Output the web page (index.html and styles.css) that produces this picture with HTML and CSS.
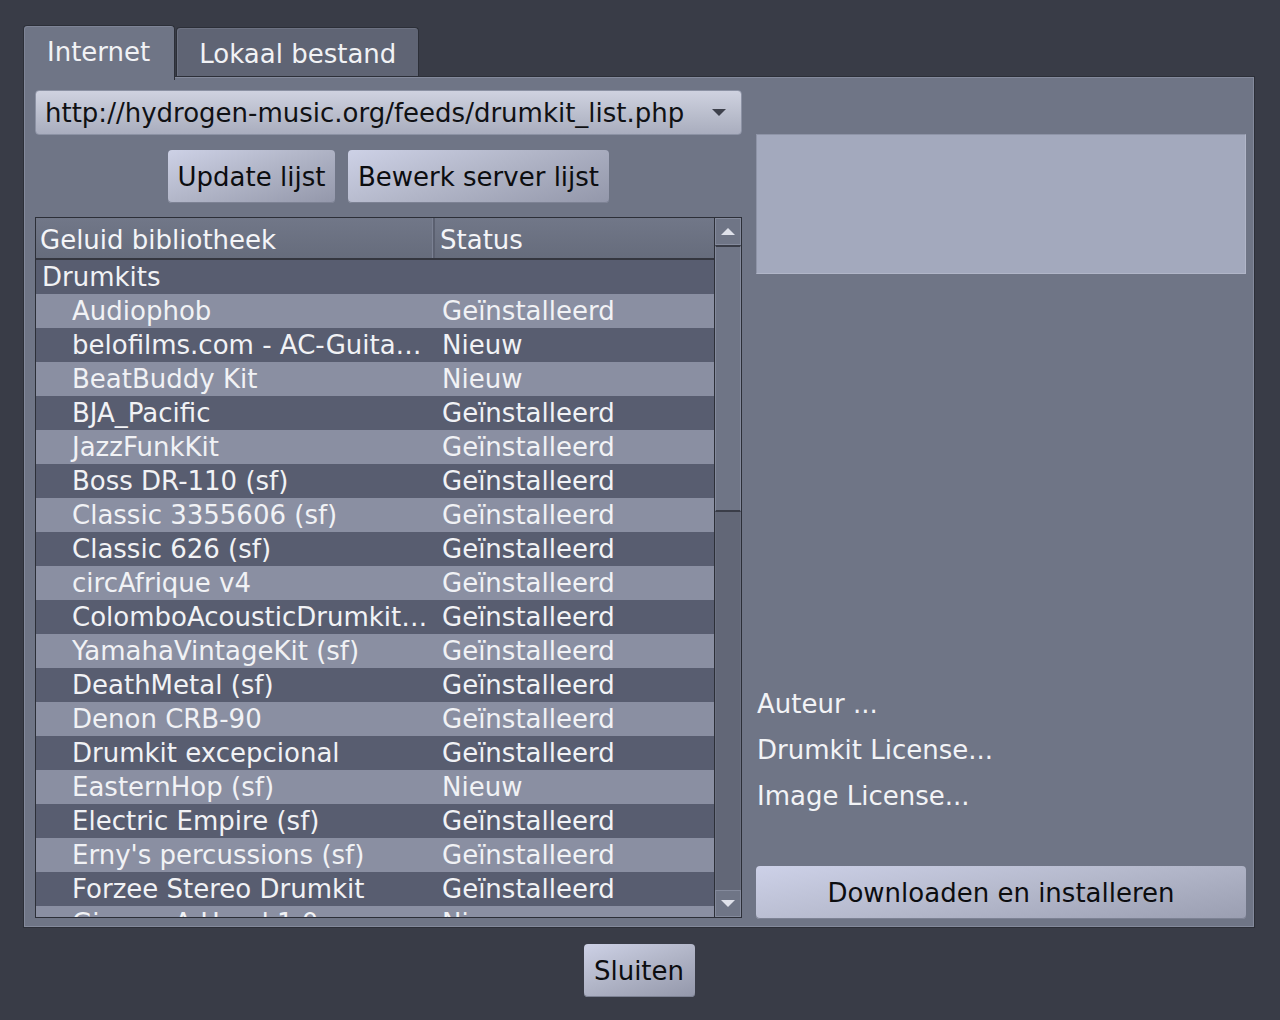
FILE: index.html
```html
<!DOCTYPE html>
<html lang="nl">
<head>
<meta charset="utf-8">
<title>Soundlibrary</title>
<link rel="stylesheet" href="styles.css">
</head>
<body>
<div class="dialog">
  <div class="tabbar">
    <div class="tab active">Internet</div>
    <div class="tab">Lokaal bestand</div>
  </div>
  <div class="pane">
    <div class="left">
      <div class="combo">
        <span class="combo-text">http://hydrogen-music.org/feeds/drumkit_list.php</span>
        <svg class="combo-arrow" width="16" height="9" viewBox="0 0 16 9"><polygon points="1,1 15,1 8,8" fill="#3e414c"/></svg>
      </div>
      <div class="btnrow">
        <button class="btn">Update lijst</button>
        <button class="btn">Bewerk server lijst</button>
      </div>
      <div class="table">
        <div class="tmain">
          <div class="thead">
            <div class="th c1">Geluid bibliotheek</div>
            <div class="th c2">Status</div>
          </div>
          <div class="tbody">
            <div class="row group"><span class="c1 name top">Drumkits</span><span class="c2"></span></div>
            <div class="row light"><span class="c1 name">Audiophob</span><span class="c2">Geïnstalleerd</span></div>
            <div class="row dark"><span class="c1 name">belofilms.com - AC-Guita…</span><span class="c2">Nieuw</span></div>
            <div class="row light"><span class="c1 name">BeatBuddy Kit</span><span class="c2">Nieuw</span></div>
            <div class="row dark"><span class="c1 name">BJA_Pacific</span><span class="c2">Geïnstalleerd</span></div>
            <div class="row light"><span class="c1 name">JazzFunkKit</span><span class="c2">Geïnstalleerd</span></div>
            <div class="row dark"><span class="c1 name">Boss DR-110 (sf)</span><span class="c2">Geïnstalleerd</span></div>
            <div class="row light"><span class="c1 name">Classic 3355606 (sf)</span><span class="c2">Geïnstalleerd</span></div>
            <div class="row dark"><span class="c1 name">Classic 626 (sf)</span><span class="c2">Geïnstalleerd</span></div>
            <div class="row light"><span class="c1 name">circAfrique v4</span><span class="c2">Geïnstalleerd</span></div>
            <div class="row dark"><span class="c1 name">ColomboAcousticDrumkit…</span><span class="c2">Geïnstalleerd</span></div>
            <div class="row light"><span class="c1 name">YamahaVintageKit (sf)</span><span class="c2">Geïnstalleerd</span></div>
            <div class="row dark"><span class="c1 name">DeathMetal (sf)</span><span class="c2">Geïnstalleerd</span></div>
            <div class="row light"><span class="c1 name">Denon CRB-90</span><span class="c2">Geïnstalleerd</span></div>
            <div class="row dark"><span class="c1 name">Drumkit excepcional</span><span class="c2">Geïnstalleerd</span></div>
            <div class="row light"><span class="c1 name">EasternHop (sf)</span><span class="c2">Nieuw</span></div>
            <div class="row dark"><span class="c1 name">Electric Empire (sf)</span><span class="c2">Geïnstalleerd</span></div>
            <div class="row light"><span class="c1 name">Erny's percussions (sf)</span><span class="c2">Geïnstalleerd</span></div>
            <div class="row dark"><span class="c1 name">Forzee Stereo Drumkit</span><span class="c2">Geïnstalleerd</span></div>
            <div class="row light"><span class="c1 name">Gimme A Hand 1.0</span><span class="c2">Nieuw</span></div>
          </div>
        </div>
        <div class="scrollbar">
          <div class="sb-btn"><svg width="16" height="9" viewBox="0 0 16 9"><polygon points="1,8 15,8 8,1" fill="#dfe1ea"/></svg></div>
          <div class="sb-handle"></div>
          <div class="sb-track"></div>
          <div class="sb-btn"><svg width="16" height="9" viewBox="0 0 16 9"><polygon points="1,1 15,1 8,8" fill="#dfe1ea"/></svg></div>
        </div>
      </div>
    </div>
    <div class="right">
      <div class="imagebox"></div>
      <div class="spacer"></div>
      <div class="info">
        <div class="info-line">Auteur ...</div>
        <div class="info-line">Drumkit License...</div>
        <div class="info-line">Image License...</div>
      </div>
      <button class="btn wide">Downloaden en installeren</button>
    </div>
  </div>
  <div class="footer">
    <button class="btn">Sluiten</button>
  </div>
</div>
</body>
</html>
```

FILE: styles.css
```css
* { box-sizing: border-box; }
html, body {
  margin: 0;
  padding: 0;
  background: #393c47;
  width: 1280px;
  height: 1020px;
  overflow: hidden;
  font-family: "DejaVu Sans", sans-serif;
  font-size: 26px;
  color: #f1f2f5;
}
.dialog {
  padding: 23px 25px 0 23px;
}
.tabbar {
  display: flex;
  align-items: flex-end;
  height: 55px;
  position: relative;
  z-index: 2;
}
.tab {
  height: 49px;
  padding: 4px 22px 0 22px;
  margin-left: 1px;
  background: #5f6474;
  border: 1px solid #2c2f38;
  border-bottom: none;
  border-radius: 4px 4px 0 0;
  display: flex;
  align-items: center;
  box-shadow: inset 1px 1px 0 #6d7282;
  margin-bottom: 2px;
  white-space: nowrap;
}
.tab.active {
  height: 55px;
  margin-left: 0;
  margin-bottom: -2px;
  padding: 0 24px 2px 23px;
  background: #6f7586;
  box-shadow: inset 1px 1px 0 #7e8496;
}
.pane {
  height: 852px;
  margin-top: -2px;
  background: #6f7586;
  border: 1px solid #2c2f38;
  box-shadow: inset 0 0 0 1px #848a9c;
  display: flex;
  padding: 13px 8px 8px 11px;
  gap: 14px;
}
.left {
  width: 707px;
  display: flex;
  flex-direction: column;
}
.combo {
  height: 45px;
  border-radius: 4px;
  background: linear-gradient(180deg, #cfd2e0 0%, #b8bccb 60%, #a9adbe 100%);
  border: 1px solid #8c92a4;
  display: flex;
  align-items: center;
  padding: 0 14px 0 9px;
  color: #101114;
}
.combo-text { flex: 1; white-space: nowrap; }
.combo-arrow { display: block; }
.btnrow {
  display: flex;
  justify-content: center;
  gap: 13px;
  margin-top: 15px;
}
.btn {
  font-family: "DejaVu Sans", sans-serif;
  font-size: 26px;
  color: #0c0d10;
  height: 53px;
  padding: 0;
  white-space: nowrap;
  border: none;
  border-radius: 4px;
  background: linear-gradient(160deg, #cdd1e6 0%, #b3b7c9 45%, #9397aa 100%);
  box-shadow: inset 0 -1px 0 #7d8294;
}
.btnrow .btn:first-child { width: 167px; }
.btnrow .btn:last-child { width: 261px; }
.table {
  margin-top: 14px;
  height: 701px;
  border: 1px solid #2c2f38;
  display: flex;
  background: #6f7586;
}
.tmain {
  width: 679px;
  display: flex;
  flex-direction: column;
  overflow: hidden;
}
.thead {
  display: flex;
  height: 42px;
  background: linear-gradient(180deg, #717788 0%, #666c7c 100%);
  border-bottom: 2px solid #34363f;
}
.th {
  display: flex;
  align-items: center;
  padding-left: 4px;
  padding-top: 3px;
  color: #f4f5f8;
}
.th.c1 {
  width: 399px;
  border-right: 2px solid #5b6070;
  box-shadow: inset -1px 0 0 #7b8193;
}
.th.c2 { flex: 1; padding-left: 5px; }
.tbody { flex: 1; overflow: hidden; }
.row {
  display: flex;
  height: 34px;
  align-items: center;
  white-space: nowrap;
}
.row.group, .row.dark { background: #585d70; }
.row.light { background: #8a8fa2; }
.row .c1 {
  width: 399px;
  padding-left: 36px;
  overflow: hidden;
}
.row .c1.top { padding-left: 6px; }
.row .c2 { flex: 1; padding-left: 7px; }
.scrollbar {
  width: 27px;
  border-left: 1px solid #2c2f38;
  display: flex;
  flex-direction: column;
  background: #636878;
}
.sb-btn {
  height: 27px;
  background: #6f7586;
  border: 1px solid #848a9c;
  display: flex;
  align-items: center;
  justify-content: center;
}
.sb-handle {
  height: 267px;
  background: #6f7586;
  border: 1px solid #848a9c;
  border-top: 2px solid #3a3d48;
  border-bottom: 2px solid #3a3d48;
}
.sb-track {
  flex: 1;
  background: #626777;
  border-left: 1px solid #6b7080;
  border-right: 1px solid #6b7080;
}
.right {
  flex: 1;
  display: flex;
  flex-direction: column;
}
.imagebox {
  margin-top: 44px;
  height: 140px;
  background: #a3a9bd;
  border: 1px solid #b1b6c8;
  border-top-color: #8e94a7;
  border-left-color: #8e94a7;
}
.spacer { flex: 1; }
.info {
  display: flex;
  flex-direction: column;
  margin-bottom: 47px;
}
.info-line {
  height: 46px;
  line-height: 46px;
  padding-left: 1px;
  color: #f2f3f6;
}
.btn.wide {
  width: 100%;
  height: 53px;
  flex-shrink: 0;
  background: linear-gradient(170deg, #cdd1e8 0%, #b5b9cc 50%, #9a9eb1 100%);
}
.footer {
  display: flex;
  justify-content: center;
  padding-top: 16px;
}
.footer .btn { width: 111px; }
```
